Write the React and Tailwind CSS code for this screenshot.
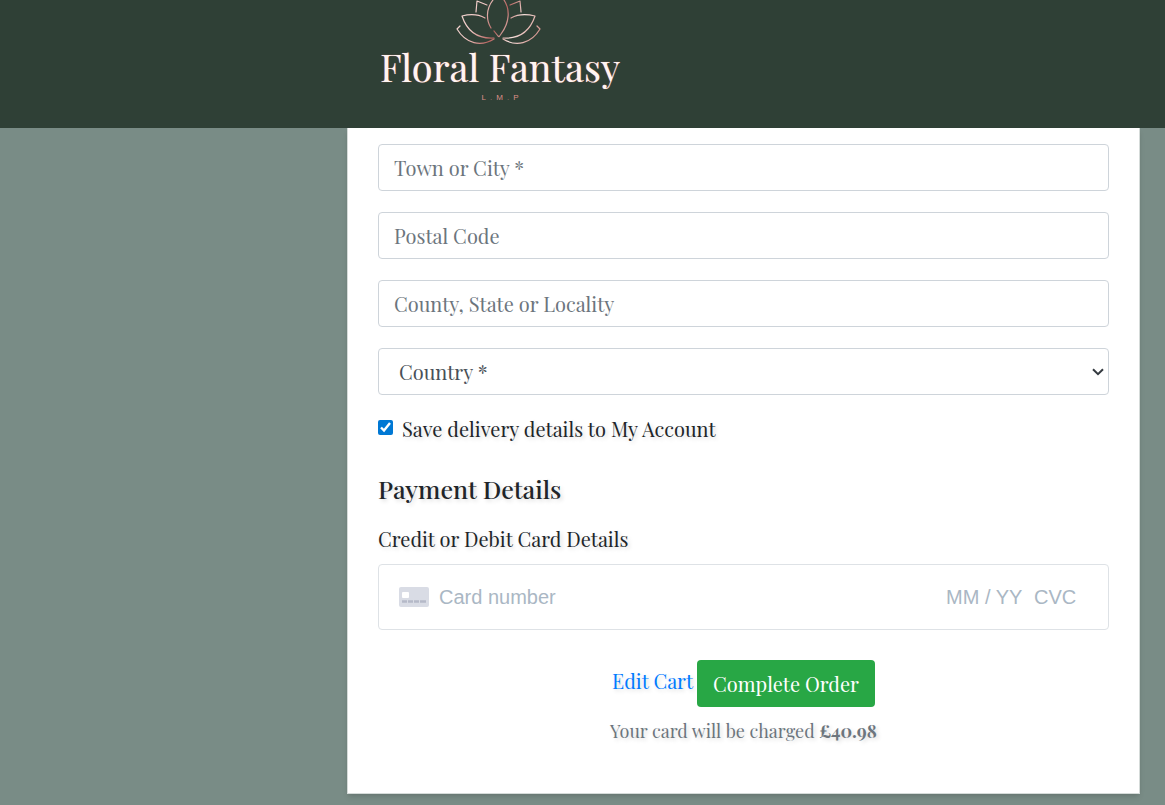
const serif = "font-['Playfair_Display','Liberation_Serif',serif]";
const shadow = "[text-shadow:2px_2px_4px_rgba(0,0,0,0.15)]";
const field =
  "block h-[47px] w-full rounded border border-[#ced4da] bg-white text-[20px] placeholder:text-[#6c757d] placeholder:opacity-100";
const cardField =
  "bg-transparent font-['Liberation_Sans',sans-serif] text-[20px] text-[#32325d] outline-none placeholder:text-[#aab7c4] placeholder:opacity-100";

function Lotus() {
  return (
    <svg width="88" height="46" viewBox="0 0 88 46" fill="none" stroke="url(#rose)" strokeWidth="1.2" strokeLinejoin="round" strokeLinecap="round" aria-hidden="true">
      <defs>
        <linearGradient id="rose" gradientUnits="userSpaceOnUse" x1="0" y1="0" x2="86" y2="46">
          <stop offset="0" stopColor="#f3dcd8" />
          <stop offset="0.28" stopColor="#f0c8c4" />
          <stop offset="0.5" stopColor="#b8635f" />
          <stop offset="0.68" stopColor="#f5dfdb" />
          <stop offset="1" stopColor="#c97670" />
        </linearGradient>
      </defs>
      <path d="M37 0C30 9 30 20 35 28M38 31L42 36C43 37 43 37 45 34C54 22 54 9 48 0" />
      <path d="M31 5L21 1L20 12M54 5L64 1L65 12" />
      <path d="M29 18C22 14 14 14 6 16C11 31 22 39 38 38" />
      <path d="M55 18C62 14 71 14 79 16C74 31 63 39 47 38" />
      <path d="M4 26L1 29C10 44 25 47 38 39" />
      <path d="M81 26L84 29C75 44 60 47 47 39" />
    </svg>
  );
}

function CardIcon() {
  return (
    <svg width="30" height="20" viewBox="0 0 30 20" className="shrink-0" aria-hidden="true">
      <rect width="30" height="20" rx="2" fill="#d9dce5" />
      <rect x="3" y="5" width="7" height="6" rx="1" fill="#fff" />
      <path d="M3 14.5h5M9 14.5h5M15 14.5h5M21 14.5h6" stroke="#b5b9c8" strokeWidth="2.4" />
    </svg>
  );
}

export default function App() {
  return (
    <div className={`flex min-h-screen flex-col bg-[#798c86] text-[#212529] ${serif}`}>
      <header className="flex h-32 shrink-0 bg-[#2f4036] pl-[380px]">
        <a href="#home" className="flex flex-col items-center">
          <Lotus />
          <span className="-mt-[5px] text-[38px] leading-[52px] whitespace-nowrap text-[#fff5f2] [text-shadow:0_0_1px_#d0716b]">Floral Fantasy</span>
          <span className="flex gap-1 font-['Liberation_Sans',sans-serif] text-[8px] leading-[10px] text-[#dc8f89]">
            <span>L</span><span className="opacity-60">.</span><span>M</span><span className="opacity-60">.</span><span>P</span>
          </span>
        </a>
      </header>
      <main className="pr-[25px] pb-[11px] pl-[347px]">
        <form className="border border-t-0 border-[#d5dbd9] bg-white px-[30px] pt-4 pb-[50px] shadow-md" onSubmit={(e) => e.preventDefault()}>
          <div className="flex flex-col gap-[21px]">
            <input className={`${field} px-[15px]`} aria-label="Town or City" placeholder="Town or City *" />
            <input className={`${field} px-[15px]`} aria-label="Postal Code" placeholder="Postal Code" />
            <input className={`${field} px-[15px]`} aria-label="County, State or Locality" placeholder="County, State or Locality" />
            <div className="relative">
              <select className={`${field} appearance-none px-5 text-[#495057]`} aria-label="Country" defaultValue="">
                <option value="">Country *</option>
              </select>
              <svg width="12" height="8" viewBox="0 0 12 8" fill="none" stroke="#343a40" strokeWidth="2" className="pointer-events-none absolute top-5 right-[5px]" aria-hidden="true">
                <path d="M1 1.2L6 6.2L11 1.2" />
              </svg>
            </div>
          </div>
          <div className="mt-[18px] flex items-start gap-[9px]">
            <input id="save" type="checkbox" defaultChecked className="mt-[7px] size-[15px] accent-[#0078d4]" />
            <label htmlFor="save" className={`text-[20px] leading-8 ${shadow}`}>Save delivery details to My Account</label>
          </div>
          <h2 className={`mt-[26px] text-[25px] leading-9 font-medium ${shadow}`}>Payment Details</h2>
          <label htmlFor="card" className={`mt-[17px] block text-[20px] leading-[30px] ${shadow}`}>Credit or Debit Card Details</label>
          <div className="mt-[10px] flex h-[66px] items-center rounded border border-[#dee2e6] pr-[31px] pl-5">
            <CardIcon />
            <input id="card" className={`ml-[10px] min-w-0 flex-1 ${cardField}`} placeholder="Card number" />
            <input aria-label="Expiry date" className={`w-[88px] ${cardField}`} placeholder="MM / YY" />
            <input aria-label="Security code" className={`w-[43px] ${cardField}`} placeholder="CVC" />
          </div>
          <div className="mt-[30px] flex items-start justify-center gap-1">
            <a href="#cart" className={`text-[20px] leading-[42px] text-[#007bff] ${shadow}`}>Edit Cart</a>
            <button type="submit" className="h-[47px] rounded bg-[#28a745] px-4 text-[20px] whitespace-nowrap text-white">Complete Order</button>
          </div>
          <p className={`mt-3 text-center text-[18px] leading-6 text-[#6c757d] ${shadow}`}>
            Your card will be charged <strong>£40.98</strong>
          </p>
        </form>
      </main>
    </div>
  );
}
